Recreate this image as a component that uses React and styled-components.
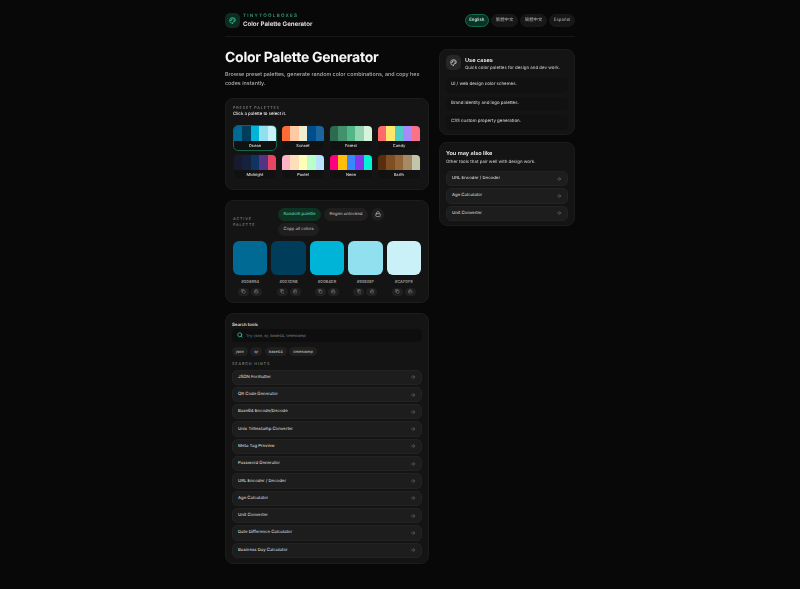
import React from 'react';
import styled, { createGlobalStyle } from 'styled-components';
import { Palette, Search, Copy, Lock, ArrowRight } from 'lucide-react';

const presets = [
  { name: 'Ocean', colors: ['#006994', '#003d5b', '#00b4d8', '#90e0ef', '#caf0f8'], selected: true },
  { name: 'Sunset', colors: ['#ff6b35', '#ffc9a3', '#efefd0', '#004e89', '#1a659e'] },
  { name: 'Forest', colors: ['#2d6a4f', '#40916c', '#52b788', '#95d5b2', '#d8f3dc'] },
  { name: 'Candy', colors: ['#ff6b6b', '#ffe66d', '#4ecdc4', '#a78bfa', '#fb7185'] },
  { name: 'Midnight', colors: ['#1a1a2e', '#16213e', '#0f3460', '#533483', '#e94560'] },
  { name: 'Pastel', colors: ['#ffb3c6', '#ffdfba', '#ffffba', '#baffc9', '#bae1ff'] },
  { name: 'Neon', colors: ['#ff0080', '#ffbe0b', '#3a86ff', '#8338ec', '#00f5d4'] },
  { name: 'Earth', colors: ['#582f0e', '#7f4f24', '#936639', '#a68a64', '#c2c5aa'] },
];

const active = [
  { hex: '#006994', color: '#006994' },
  { hex: '#003D5B', color: '#003d5b' },
  { hex: '#00B4D8', color: '#00b4d8' },
  { hex: '#90E0EF', color: '#90e0ef' },
  { hex: '#CAF0F8', color: '#caf0f8' },
];

const hints = [
  'JSON Formatter',
  'QR Code Generator',
  'Base64 Encode/Decode',
  'Unix Timestamp Converter',
  'Meta Tag Preview',
  'Password Generator',
  'URL Encoder / Decoder',
  'Age Calculator',
  'Unit Converter',
  'Date Difference Calculator',
  'Business Day Calculator',
];

const GlobalStyle = createGlobalStyle`
  html, body {
    margin: 0;
    background: #080808;
  }
  * {
    box-sizing: border-box;
  }
  body {
    font-family: Inter, "Noto Sans CJK SC", sans-serif;
    color: #ededed;
    text-rendering: geometricPrecision;
  }
`;

const Page = styled.div`
  width: 350px;
  margin: 0 auto;
  height: 589px;
  padding-top: 13px;
  filter: blur(0.3px);
`;

const Header = styled.header`
  display: flex;
  align-items: center;
  justify-content: space-between;
  height: 24px;
  padding-bottom: 8px;
  border-bottom: 1px solid #161616;
  margin-bottom: 12px;
`;

const Brand = styled.div`
  display: flex;
  align-items: center;
  gap: 3px;
`;

const LogoBox = styled.div`
  width: 15px;
  height: 15px;
  border-radius: 5px;
  background: #0d2c22;
  color: #34d399;
  display: flex;
  align-items: center;
  justify-content: center;
`;

const BrandName = styled.div`
  font-size: 4.6px;
  font-weight: 600;
  letter-spacing: 1.25px;
  color: #2f9e74;
  line-height: 7px;
`;

const BrandTitle = styled.div`
  font-size: 6.15px;
  font-weight: 600;
  color: #ececec;
  line-height: 9px;
`;

const Langs = styled.div`
  display: flex;
  gap: 2.2px;
`;

const Lang = styled.div`
  height: 13px;
  padding: 0 3.6px;
  border-radius: 7px;
  font-size: 4.4px;
  line-height: 11px;
  font-weight: 500;
  border: 1px solid ${(p) => (p.$on ? '#126a4c' : '#181818')};
  background: ${(p) => (p.$on ? '#0b3325' : '#171717')};
  color: ${(p) => (p.$on ? '#c5eedd' : '#9a9a9a')};
`;

const Columns = styled.div`
  display: grid;
  grid-template-columns: 204px 136px;
  gap: 10px;
  align-items: start;
`;

const Column = styled.div`
  display: flex;
  flex-direction: column;
`;

const Title = styled.h1`
  margin: 0;
  font-size: 14px;
  font-weight: 700;
  letter-spacing: -0.27px;
  line-height: 18px;
  color: #f6f6f6;
`;

const Lead = styled.p`
  margin: 4px 0 9px;
  font-size: 5.4px;
  font-weight: 500;
  line-height: 8.8px;
  color: #b0b0b0;
`;

const Card = styled.section`
  background: #141414;
  border: 1px solid #1c1c1c;
  border-radius: 8px;
  padding: ${(p) => p.$pad};
  margin-bottom: ${(p) => p.$gap || '10px'};
`;

const Eyebrow = styled.div`
  flex: none;
  width: ${(p) => p.$width || 'auto'};
  font-size: 3.7px;
  font-weight: 500;
  letter-spacing: 0.9px;
  color: #8a8a8a;
  line-height: 6px;
`;

const Hint = styled.div`
  font-size: 4.35px;
  font-weight: 500;
  color: #e6e6e6;
  line-height: 8px;
  margin-bottom: 6px;
`;

const PresetGrid = styled.div`
  display: grid;
  grid-template-columns: repeat(4, 44px);
  justify-content: space-between;
  row-gap: 3px;
`;

const Preset = styled.div`
  height: 26px;
  border-radius: 5px;
  overflow: hidden;
  background: #111;
  border: 1px solid ${(p) => (p.$on ? '#14664a' : '#171717')};
  display: flex;
  flex-direction: column;
`;

const Strip = styled.div`
  height: 15px;
  display: flex;
  flex: none;
`;

const StripColor = styled.div`
  flex: 1;
  background: ${(p) => p.$c};
`;

const PresetName = styled.div`
  flex: 1;
  text-align: center;
  font-size: 4px;
  font-weight: 500;
  line-height: 9px;
  color: #dcdcdc;
`;

const ActiveHead = styled.div`
  display: flex;
  align-items: center;
  margin-bottom: 5px;
`;

const Actions = styled.div`
  display: flex;
  flex-wrap: wrap;
  gap: 2px 3px;
  width: 112px;
`;

const Pill = styled.div`
  height: 13px;
  padding: 0 5.5px;
  border-radius: 7px;
  font-size: 4.3px;
  line-height: 13px;
  font-weight: 500;
  background: ${(p) => (p.$on ? '#0e3325' : '#1f1f1f')};
  color: ${(p) => (p.$on ? '#5ad6a4' : '#bcbcbc')};
`;

const RoundBtn = styled.div`
  width: 13px;
  height: 13px;
  border-radius: 50%;
  background: #1f1f1f;
  color: #d8d8d8;
  display: flex;
  align-items: center;
  justify-content: center;
`;

const Swatches = styled.div`
  display: grid;
  grid-template-columns: repeat(5, 34.4px);
  justify-content: space-between;
`;

const Swatch = styled.div`
  display: flex;
  flex-direction: column;
  align-items: center;
`;

const SwatchColor = styled.div`
  width: 100%;
  height: 34px;
  border-radius: 6px;
  background: ${(p) => p.$c};
`;

const Hex = styled.div`
  font-size: 4px;
  font-weight: 500;
  line-height: 6px;
  color: #a8a8a8;
  margin: 4px 0 3px;
`;

const SwatchBtns = styled.div`
  display: flex;
  gap: 2px;
`;

const MiniBtn = styled.div`
  width: 11px;
  height: 8px;
  border-radius: 4px;
  background: #202020;
  color: #a4a4a4;
  display: flex;
  align-items: center;
  justify-content: center;
`;

const SearchLabel = styled.div`
  font-size: 4.3px;
  font-weight: 600;
  color: #e6e6e6;
  line-height: 7px;
`;

const SearchBox = styled.div`
  height: 13px;
  border-radius: 4px;
  background: #0e0e0e;
  display: flex;
  align-items: center;
  gap: 3px;
  padding-left: 5px;
  margin-bottom: 5px;
  color: #34d399;
`;

const Placeholder = styled.span`
  font-size: 3.9px;
  font-weight: 500;
  color: #6e6e6e;
`;

const Chips = styled.div`
  display: flex;
  gap: 2.5px;
  margin-bottom: 5px;
`;

const Chip = styled.div`
  height: 9px;
  padding: 0 4px;
  border-radius: 5px;
  background: #1f1f1f;
  font-size: 3.9px;
  font-weight: 500;
  line-height: 9px;
  color: #bcbcbc;
`;

const ToolList = styled.div`
  display: flex;
  flex-direction: column;
  gap: 2px;
  margin-top: ${(p) => p.$top || '3px'};
`;

const ToolRow = styled.div`
  height: 15.3px;
  border-radius: 5px;
  background: #1d1d1d;
  border: 1px solid #232323;
  display: flex;
  align-items: center;
  justify-content: space-between;
  padding: 0 5px;
  font-size: 4.3px;
  font-weight: 500;
  color: #d4d4d4;
  svg {
    color: #7c7c7c;
  }
`;

const SideHead = styled.div`
  display: flex;
  gap: 4px;
  margin-bottom: 6px;
`;

const SideIcon = styled.div`
  width: 15px;
  height: 15px;
  border-radius: 5px;
  background: #272727;
  color: #dcdcdc;
  display: flex;
  align-items: center;
  justify-content: center;
`;

const SideText = styled.div`
  padding-top: 2px;
`;

const SideTitle = styled.div`
  font-size: 5.6px;
  font-weight: 600;
  line-height: 8px;
  color: #f0f0f0;
`;

const SideSub = styled.div`
  margin-top: ${(p) => p.$top || '0'};
  font-size: 4.4px;
  font-weight: 500;
  line-height: 7px;
  color: #bababa;
`;

const UseCase = styled.div`
  height: 14.5px;
  border-radius: 5px;
  background: #111;
  padding: 0 5px;
  margin-top: 4px;
  font-size: 4.4px;
  font-weight: 500;
  line-height: 14.5px;
  color: #c0c0c0;
`;

const Arrow = () => <ArrowRight size={6} />;

export default function App() {
  return (
    <>
      <GlobalStyle />
      <Page>
        <Header>
          <Brand>
            <LogoBox>
              <Palette size={7} strokeWidth={2.4} />
            </LogoBox>
            <div>
              <BrandName>TINYTOOLBOXES</BrandName>
              <BrandTitle>Color Palette Generator</BrandTitle>
            </div>
          </Brand>
          <Langs>
            <Lang $on>English</Lang>
            <Lang>繁體中文</Lang>
            <Lang>簡體中文</Lang>
            <Lang>Español</Lang>
          </Langs>
        </Header>
        <Columns>
          <Column>
            <Title>Color Palette Generator</Title>
            <Lead>
              Browse preset palettes, generate random color combinations, and copy hex codes
              instantly.
            </Lead>
            <Card $pad="6px 7px 9px">
              <Eyebrow>PRESET PALETTES</Eyebrow>
              <Hint>Click a palette to select it.</Hint>
              <PresetGrid>
                {presets.map((p) => (
                  <Preset key={p.name} $on={p.selected}>
                    <Strip>
                      {p.colors.map((c) => (
                        <StripColor key={c} $c={c} />
                      ))}
                    </Strip>
                    <PresetName>{p.name}</PresetName>
                  </Preset>
                ))}
              </PresetGrid>
            </Card>
            <Card $pad="7px 7px 6px">
              <ActiveHead>
                <Eyebrow $width="45px">
                  ACTIVE
                  <br />
                  PALETTE
                </Eyebrow>
                <Actions>
                  <Pill $on>Random palette</Pill>
                  <Pill>Regen unlocked</Pill>
                  <RoundBtn>
                    <Lock size={6} />
                  </RoundBtn>
                  <Pill>Copy all colors</Pill>
                </Actions>
              </ActiveHead>
              <Swatches>
                {active.map((s) => (
                  <Swatch key={s.hex}>
                    <SwatchColor $c={s.color} />
                    <Hex>{s.hex}</Hex>
                    <SwatchBtns>
                      <MiniBtn>
                        <Copy size={4.5} />
                      </MiniBtn>
                      <MiniBtn>
                        <Lock size={4.5} />
                      </MiniBtn>
                    </SwatchBtns>
                  </Swatch>
                ))}
              </Swatches>
            </Card>
            <Card $pad="8px 6px 5px" $gap="0">
              <SearchLabel>Search tools</SearchLabel>
              <SearchBox>
                <Search size={6} strokeWidth={3} />
                <Placeholder>Try: json, qr, base64, timestamp</Placeholder>
              </SearchBox>
              <Chips>
                <Chip>json</Chip>
                <Chip>qr</Chip>
                <Chip>base64</Chip>
                <Chip>timestamp</Chip>
              </Chips>
              <Eyebrow>SEARCH HINTS</Eyebrow>
              <ToolList>
                {hints.map((h) => (
                  <ToolRow key={h}>
                    {h}
                    <Arrow />
                  </ToolRow>
                ))}
              </ToolList>
            </Card>
          </Column>
          <Column>
            <Card $pad="5px 6px 4.5px" $gap="7px">
              <SideHead>
                <SideIcon>
                  <Palette size={7} strokeWidth={2.2} />
                </SideIcon>
                <SideText>
                  <SideTitle>Use cases</SideTitle>
                  <SideSub>Quick color palettes for design and dev work.</SideSub>
                </SideText>
              </SideHead>
              <UseCase>UI / web design color schemes.</UseCase>
              <UseCase>Brand identity and logo palettes.</UseCase>
              <UseCase>CSS custom property generation.</UseCase>
            </Card>
            <Card $pad="7px 6px 4px" $gap="0">
              <SideTitle>You may also like</SideTitle>
              <SideSub $top="1px">Other tools that pair well with design work.</SideSub>
              <ToolList $top="5px">
                <ToolRow>
                  URL Encoder / Decoder
                  <Arrow />
                </ToolRow>
                <ToolRow>
                  Age Calculator
                  <Arrow />
                </ToolRow>
                <ToolRow>
                  Unit Converter
                  <Arrow />
                </ToolRow>
              </ToolList>
            </Card>
          </Column>
        </Columns>
      </Page>
    </>
  );
}
